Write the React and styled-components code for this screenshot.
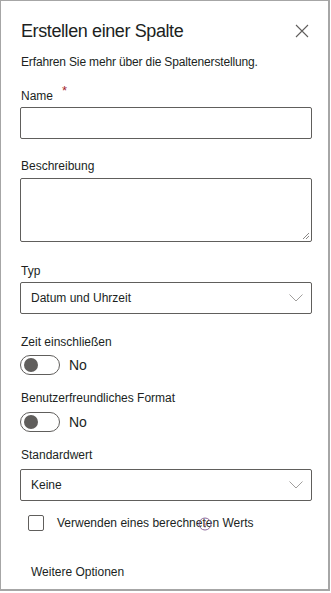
import React from "react";
import styled, { createGlobalStyle } from "styled-components";

const Global = createGlobalStyle`
  html, body { margin: 0; padding: 0; background: #fff; }
  body { font-family: "Liberation Sans", Arial, sans-serif; color: #201f1e; }
  * { box-sizing: border-box; }
`;

const Panel = styled.div`
  width: 330px;
  height: 591px;
  border-style: solid;
  border-color: #a6a6a6;
  border-width: 1px 2px 2px 1px;
  background: #fff;
  display: flex;
  flex-direction: column;
  padding: 0 16px 0 19px;
  overflow: hidden;
`;

const Header = styled.div`
  display: flex;
  align-items: center;
  justify-content: space-between;
  height: 28px;
  margin-top: 16px;
`;

const Title = styled.h1`
  margin: 0;
  font-size: 18px;
  line-height: 28px;
  font-weight: 400;
  letter-spacing: -0.4px;
  color: #201f1e;
  padding-left: 1px;
`;

const CloseBtn = styled.button`
  border: 0;
  background: none;
  padding: 0;
  width: 14px;
  height: 14px;
  display: flex;
  margin-right: 3px;
  cursor: pointer;
`;

const Link = styled.div`
  font-size: 12px;
  line-height: 18px;
  color: #201f1e;
  margin-top: 8px;
  letter-spacing: -0.15px;
  padding-left: 1px;
`;

const Field = styled.div`
  display: flex;
  flex-direction: column;
  margin-top: ${(p) => p.$top || 0}px;
`;

const Label = styled.label`
  font-size: 12px;
  line-height: 18px;
  height: 18px;
  color: #201f1e;
  display: flex;
  padding-left: 1px;
  margin-bottom: ${(p) => p.$gap ?? 2}px;
`;

const Required = styled.span`
  color: #a4262c;
  margin-left: 9px;
  margin-top: -5px;
  font-size: 13px;
`;

const TextInput = styled.div`
  width: 292px;
  height: 32px;
  border: 1px solid #605e5c;
  border-radius: 2px;
`;

const TextArea = styled.div`
  position: relative;
  width: 292px;
  height: 64px;
  border: 1px solid #605e5c;
  border-radius: 2px;
`;

const Grip = styled.svg`
  position: absolute;
  right: 1px;
  bottom: 1px;
`;

const Select = styled.div`
  width: 292px;
  height: 32px;
  border: 1px solid #605e5c;
  border-radius: 2px;
  display: flex;
  align-items: center;
  justify-content: space-between;
  padding: 0 8px 0 10px;
  font-size: 12px;
`;

const ToggleRow = styled.div`
  display: flex;
  align-items: center;
  gap: 9px;
  font-size: 14px;
  height: 20px;
`;

const Track = styled.div`
  width: 40px;
  height: 20px;
  border: 1px solid #605e5c;
  border-radius: 10px;
  display: flex;
  align-items: center;
  padding-left: 3px;
`;

const Knob = styled.div`
  width: 14px;
  height: 14px;
  border-radius: 50%;
  background: #605e5c;
`;

const CheckRow = styled.div`
  position: relative;
  display: flex;
  align-items: center;
  margin-top: 14px;
  padding-left: 8px;
  font-size: 12px;
  height: 16px;
`;

const Box = styled.div`
  width: 16px;
  height: 16px;
  border: 1px solid #605e5c;
  border-radius: 2px;
  margin-right: 13px;
`;

const InfoIcon = styled.svg`
  position: absolute;
  left: 178px;
  top: 2px;
`;

const More = styled.div`
  font-size: 12px;
  line-height: 18px;
  margin-top: 32px;
  padding-left: 11px;
`;

const Chevron = () => (
  <svg width="14" height="8" viewBox="0 0 14 8">
    <path d="M0.5 0.5 L7 7 L13.5 0.5" fill="none" stroke="#a19f9d" strokeWidth="1" />
  </svg>
);

const Toggle = () => (
  <ToggleRow>
    <Track>
      <Knob />
    </Track>
    <span>No</span>
  </ToggleRow>
);

export default function App() {
  return (
    <>
      <Global />
      <Panel>
        <Header>
          <Title>Erstellen einer Spalte</Title>
          <CloseBtn aria-label="Schließen">
            <svg width="14" height="14" viewBox="0 0 14 14">
              <path d="M1 1 L13 13 M13 1 L1 13" stroke="#605e5c" strokeWidth="1.1" fill="none" />
            </svg>
          </CloseBtn>
        </Header>
        <Link>Erfahren Sie mehr über die Spaltenerstellung.</Link>

        <Field $top={16}>
          <Label>
            Name<Required>*</Required>
          </Label>
          <TextInput />
        </Field>

        <Field $top={18}>
          <Label $gap={3}>Beschreibung</Label>
          <TextArea>
            <Grip width="9" height="9" viewBox="0 0 9 9">
              <path d="M8 2 L2 8 M8 5 L5 8" stroke="#8a8886" strokeWidth="1" />
            </Grip>
          </TextArea>
        </Field>

        <Field $top={20}>
          <Label>Typ</Label>
          <Select>
            <span>Datum und Uhrzeit</span>
            <Chevron />
          </Select>
        </Field>

        <Field $top={19}>
          <Label $gap={4}>Zeit einschließen</Label>
          <Toggle />
        </Field>

        <Field $top={14}>
          <Label $gap={5}>Benutzerfreundliches Format</Label>
          <Toggle />
        </Field>

        <Field $top={14}>
          <Label $gap={5}>Standardwert</Label>
          <Select>
            <span>Keine</span>
            <Chevron />
          </Select>
        </Field>

        <CheckRow>
          <Box />
          <span>Verwenden eines berechneten Werts</span>
          <InfoIcon width="14" height="14" viewBox="0 0 14 14">
            <circle cx="7" cy="7" r="6" fill="none" stroke="#8e6a9c" strokeWidth="1" />
            <path d="M7 6 L7 10.5" stroke="#8e6a9c" strokeWidth="1" />
            <circle cx="7" cy="4" r="0.7" fill="#8e6a9c" />
          </InfoIcon>
        </CheckRow>

        <More>Weitere Optionen</More>
      </Panel>
    </>
  );
}
